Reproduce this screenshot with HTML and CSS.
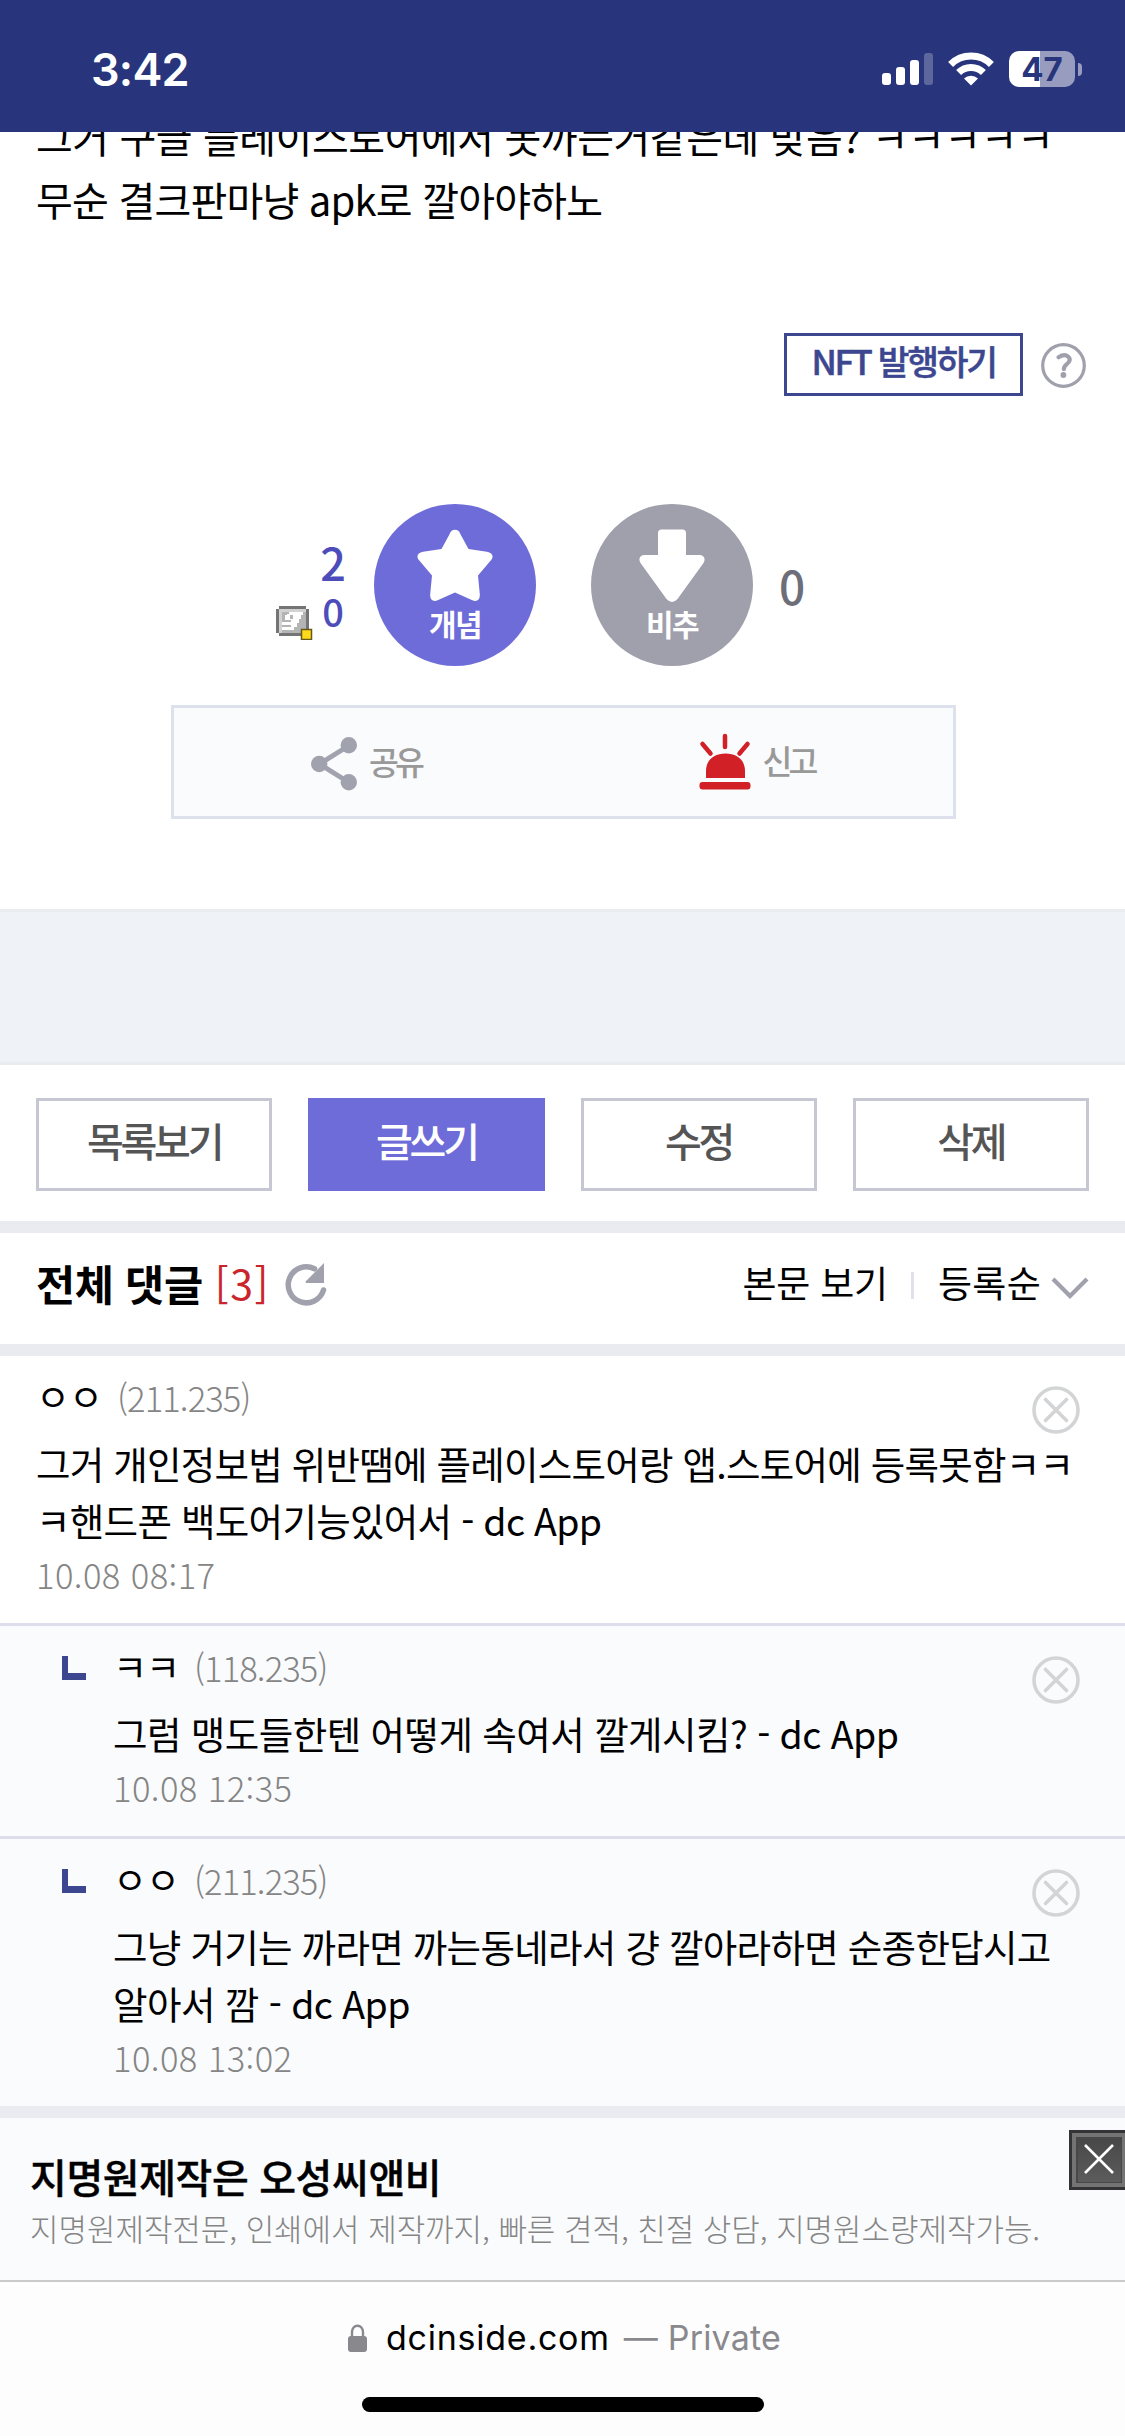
FILE: index.html
```html
<!DOCTYPE html>
<html lang="ko">
<head>
<meta charset="utf-8">
<title>dcinside.com</title>
<link rel="stylesheet" href="styles.css">
</head>
<body>
<svg class="defs" width="0" height="0" aria-hidden="true">
  <symbol id="remove" viewBox="0 0 48 48"><g fill="none" stroke="#d3d4d5" stroke-width="3.6" stroke-linecap="round"><circle cx="24" cy="24" r="22"/><path d="M13.5 13.5l21 21M34.5 13.5l-21 21"/></g></symbol>
  <symbol id="branch" viewBox="0 0 24 24"><path d="M0 0h6v17h18v7H0z" fill="#3c4790"/></symbol>
</svg>
<header class="status">
  <span class="clock">3:42</span>
  <div class="indicators">
    <svg width="51" height="36" viewBox="0 0 51 36" fill="#fff"><rect y="22" width="9" height="12" rx="3"/><rect x="14" y="16" width="9" height="18" rx="3"/><rect x="28" y="9" width="9" height="25" rx="3"/><rect x="42" y="2" width="9" height="32" rx="3" opacity=".25"/></svg>
    <svg class="wifi" width="46" height="36" viewBox="0 0 46 36"><g fill="none" stroke="#fff" stroke-width="7"><path d="M2.6 13.4a29 29 0 0 1 40.8 0"/><path d="M10.6 21.5a17.6 17.6 0 0 1 24.8 0"/></g><path d="M23 34.5l-7-7a10 10 0 0 1 14 0z" fill="#fff"/></svg>
    <div class="battery">47</div><i class="knob"></i>
  </div>
</header>

<main>
<section class="post">
  <div class="post-text">
    <p>그거 구글 플레이스토어에서 못까는거같은데 맞음? ㅋㅋㅋㅋㅋ</p>
    <p class="tight">무순 결크판마냥 apk로 깔아야하노</p>
  </div>
  <div class="nft">
    <button class="nft-button">NFT 발행하기</button>
    <svg width="45" height="45" viewBox="0 0 45 45" fill="none" stroke="#a0a0ac"><circle cx="22.5" cy="22.5" r="20.8" stroke-width="3.2"/><path d="M17.5 14.2q6-3.6 9.6-.6c3 2.6 1.3 5.3-1.2 7.4-2 1.7-3 2.7-3.1 5.2" stroke-width="4.2" stroke-linecap="round"/><circle cx="22.4" cy="32" r="2.9" fill="#a0a0ac" stroke="none"/></svg>
  </div>
  <div class="votes">
    <div class="ups">
      <span class="up">2</span>
      <span class="member">
        <svg width="37" height="34" viewBox="0 0 37 34"><path d="M3 0h27v3h3v21h-3v6H3v-3H0V3h3z" fill="#757575"/><path d="M3 3h27v24H3z" fill="#b4b4b4"/><path d="M3 3h27v3H6v21H3z" fill="#d2d2d2"/><path d="M13 6h14v3h-2v4h-2v4h-2v4h-3v3H6v-3h9v-2H6v-3h9v-2H9v-5h2V8h2zM14 9v4h3V9z" fill="#fff"/><rect x="25.5" y="23.5" width="10" height="10" fill="#ffd91a" stroke="#66571b" stroke-width="1.5"/></svg>
        <span>0</span>
      </span>
    </div>
    <button class="round recommend">
      <svg width="76" height="73" viewBox="0 0 76 73"><path d="M38 .8c3 0 4.6 2 5.6 4.600L51.500 20l18.400 2.700c6 1 7.300 5.300 3.600 9.100L61 46.500l1.800 18.800c.5 6-3.300 8-8 5.700L38 63.400 21.200 71c-4.700 2.300-8.500.3-8-5.700L15 46.500 2.500 31.800c-3.700-3.800-2.400-8.100 3.600-9.100L24.500 20 32.400 5.400C33.400 2.800 35 .8 38 .8z" fill="#fff"/></svg>
      <span>개념</span>
    </button>
    <button class="round oppose">
      <svg width="66" height="73" viewBox="0 0 66 73"><path d="M22.500.500h21q3.500 0 3.500 3.500v22h13c5 0 7 4 4.500 8L38.500 70q-5.500 6-11 0L1.500 34C-1 30 1 26 6 26h13V4q0-3.500 3.500-3.500z" fill="#fff"/></svg>
      <span>비추</span>
    </button>
    <span class="down">0</span>
  </div>
  <div class="share-box">
    <div class="share"><svg width="46" height="54" viewBox="0 0 46 54"><path d="M38 8.5L8.5 27 38 45.5" fill="none" stroke="#a0a2ae" stroke-width="5"/><g fill="#a0a2ae"><circle cx="37.8" cy="8.2" r="8.2"/><circle cx="8.2" cy="27" r="8.2"/><circle cx="37.8" cy="45.2" r="8.2"/></g></svg><span>공유</span></div>
    <div class="report"><svg width="52" height="57" viewBox="0 0 52 57" fill="#d22027"><rect x=".5" y="49" width="51" height="7.5" rx="3"/><path d="M7 45V38C7 27 15 20.5 26.5 20.5S46 27 46 38v7z"/><path d="M26 3v11M3.5 11l8 9.5M48.5 11l-8 9.5" fill="none" stroke="#d22027" stroke-width="4.5" stroke-linecap="round"/></svg><span>신고</span></div>
  </div>
</section>

<div class="banner"></div>

<nav class="actions">
  <button>목록보기</button>
  <button class="write">글쓰기</button>
  <button>수정</button>
  <button>삭제</button>
</nav>

<div class="comments-head">
  <h2>전체 댓글</h2><span class="count">[3]</span>
  <svg class="refresh" width="42" height="43" viewBox="0 0 42 43"><path d="M38.5 27A18 18 0 1 1 29.5 5.8" fill="none" stroke="#a0a1ad" stroke-width="5.5" stroke-linecap="round"/><path d="M39 0v20H21.5q-2-1 0-2.5z" fill="#a0a1ad"/></svg>
  <span class="view">본문 보기</span><i class="divider"></i><span class="sort">등록순</span>
  <svg class="chevron" width="38" height="22" viewBox="0 0 38 22"><path d="M2 2l17 17L36 2" fill="none" stroke="#a0a1ad" stroke-width="4.2"/></svg>
</div>

<section class="comments">
  <article class="comment">
    <div class="content">
      <div class="who"><b>ㅇㅇ</b><span>(211.235)</span><svg class="remove"><use href="#remove"/></svg></div>
      <p class="tight">그거 개인정보법 위반땜에 플레이스토어랑 앱.스토어에 등록못함ㅋㅋ</p>
      <p>ㅋ핸드폰 백도어기능있어서 - dc App</p>
      <time>10.08 08:17</time>
    </div>
  </article>
  <article class="comment reply">
    <svg class="branch"><use href="#branch"/></svg>
    <div class="content">
      <div class="who"><b>ㅋㅋ</b><span>(118.235)</span><svg class="remove"><use href="#remove"/></svg></div>
      <p class="loose">그럼 맹도들한텐 어떻게 속여서 깔게시킴? - dc App</p>
      <time>10.08 12:35</time>
    </div>
  </article>
  <article class="comment reply">
    <svg class="branch"><use href="#branch"/></svg>
    <div class="content">
      <div class="who"><b>ㅇㅇ</b><span>(211.235)</span><svg class="remove"><use href="#remove"/></svg></div>
      <p>그냥 거기는 까라면 까는동네라서 걍 깔아라하면 순종한답시고</p>
      <p class="loose">알아서 깜 - dc App</p>
      <time>10.08 13:02</time>
    </div>
  </article>
</section>

<aside class="ad">
  <h3>지명원제작은 오성씨앤비</h3>
  <p>지명원제작전문, 인쇄에서 제작까지, 빠른 견적, 친절 상담, 지명원소량제작가능.</p>
  <svg class="ad-close" width="56" height="60" viewBox="0 0 56 60"><defs><linearGradient id="g" x2="0" y2="1"><stop stop-color="#484848"/><stop offset="1" stop-color="#5c5c5c"/></linearGradient></defs><path d="M0 0h56v60H0z" fill="#343436"/><path d="M3 3h53v54H3z" fill="#747474"/><path d="M7 7h46v46H7z" fill="#484848"/><path d="M9 9h43v43H9z" fill="url(#g)"/><path d="M16 15l28 28M44 15L16 43" stroke="#fff" stroke-width="2.6"/></svg>
</aside>
</main>

<footer class="browser">
  <div class="url">
    <svg width="19" height="28" viewBox="0 0 19 28"><rect y="12" width="19" height="16" rx="3" fill="#89898d"/><path d="M4 13V8a5.5 6.3 0 0 1 11 0v5" fill="none" stroke="#89898d" stroke-width="2.4"/></svg>
    <span class="host">dcinside.com</span><span class="private">— Private</span>
  </div>
  <i class="home"></i>
</footer>
</body>
</html>
```
FILE: styles.css
```css
* { box-sizing: border-box; margin: 0; padding: 0; }
body {
  width: 1125px; height: 2436px; overflow: hidden;
  background: #fff; color: #000;
  font-family: "Noto Sans CJK KR", sans-serif;
  white-space: nowrap;
}
button { font-family: inherit; border: 0; background: none; }
svg { display: block; flex: none; }
.defs { position: absolute; }

.status {
  height: 132px; background: #28357c; color: #fff;
  display: flex; justify-content: space-between;
  padding: 51px 43px 0 91px;
  font-family: Inter, sans-serif;
}
.clock { font-size: 45px; font-weight: 600; line-height: 37px; letter-spacing: -.8px; }
.indicators { display: flex; height: 36px; }
.wifi { margin: 0 15px; }
.battery {
  width: 66px; height: 36px; border-radius: 10px;
  background: linear-gradient(90deg, #fff 31px, #989dc0 31px);
  color: #28357c; font-size: 33px; font-weight: 700; line-height: 36px; text-align: center;
}
.knob { width: 4px; height: 13px; margin: 12px 0 0 3px; border-radius: 0 4px 4px 0; background: #989dc0; }

.post { height: 777px; overflow: hidden; }
.post-text { margin-top: -27px; padding-left: 36px; font-size: 40px; line-height: 63px; letter-spacing: -.45px; }
.post-text .tight { letter-spacing: -.8px; }
.nft { display: flex; justify-content: flex-end; align-items: center; gap: 18px; margin-top: 102px; padding-right: 39px; }
.nft svg { margin-top: 2px; }
.nft-button {
  width: 239px; height: 63px; border: 3px solid #3c4790; padding-bottom: 9px;
  color: #3c4790; font-size: 34.5px; font-weight: 500; letter-spacing: -2.3px; line-height: 48px;
  -webkit-text-stroke: .5px #3c4790;
}
.votes { display: flex; align-items: center; height: 162px; margin-top: 108px; }
.ups { width: 346px; align-self: flex-start; padding-top: 33px; display: flex; flex-direction: column; align-items: flex-end; color: #4d4cbb; font-weight: 500; }
.up { font-size: 45px; line-height: 50px; }
.member { display: flex; align-items: flex-start; gap: 9px; margin-right: 2px; font-size: 38px; line-height: 48px; }
.member svg { margin-top: 19px; }
.round { width: 162px; height: 162px; border-radius: 50%; display: flex; flex-direction: column; align-items: center; padding-top: 25px; color: #fff; }
.round span { margin-top: 4px; font-size: 30px; font-weight: 700; line-height: 34px; letter-spacing: -1.5px; }
.recommend { margin-left: 28px; background: #6e6cd8; }
.oppose { margin-left: 55px; background: #a0a0ac; }
.down { margin-left: 26px; font-size: 46px; font-weight: 500; line-height: 48px; color: #6c6e7a; }
.share-box {
  width: 785px; height: 114px; margin: 39px 0 0 171px;
  border: 3px solid #dde1ec; background: #fafbfd;
  display: grid; grid-template-columns: 1fr 1fr;
  color: #999; font-size: 32.5px; line-height: 48px; letter-spacing: -4px; font-weight: 500;
}
.share, .report { display: flex; align-items: flex-start; }
.share { padding-left: 137px; gap: 12px; padding-top: 29px; }
.report { padding-left: 135px; gap: 12px; padding-top: 25px; }
.report span { margin-top: 3px; }

.banner { height: 156px; background: #eff3f7; border: solid #ebecf0; border-width: 3px 0; }

.actions { display: grid; grid-template-columns: repeat(4, 1fr); gap: 36px; height: 156px; padding: 33px 36px 30px; }
.actions button { border: 3px solid #c7c7d3; padding-bottom: 9px; color: #555; font-size: 40px; font-weight: 500; letter-spacing: -3.2px; line-height: 60px; }
.actions .write { background: #6e6cd8; border-color: #6e6cd8; color: #fff; }

.comments-head { display: flex; align-items: center; height: 135px; border: solid #eaebf0; border-width: 12px 0; padding: 0 36px 13px; font-size: 37px; }
.comments-head h2 { font-size: 42.6px; font-weight: 700; letter-spacing: -.4px; }
.count { margin-left: 12px; font-size: 41px; letter-spacing: 1.6px; color: #c9252b; }
.refresh { margin: 5px auto 0 15px; }
.view { letter-spacing: -.2px; }
.sort { letter-spacing: .3px; }
.divider { width: 3px; height: 27px; margin: 6px 24px 0 23px; background: #dfe1ec; }
.chevron { margin: 11px 0 0 10px; }

.comment { display: flex; padding: 12px 45px 23px 36px; }
.reply { border-top: 3px solid #dcdfeb; background: #fafbfd; padding-left: 62px; }
.branch { width: 24px; height: 24px; margin: 18px 27px 0 0; }
.content { flex: 1; min-width: 0; }
.who { display: flex; align-items: baseline; height: 57px; margin-bottom: 9px; line-height: 57px; }
.who b { font-size: 37px; font-weight: 400; letter-spacing: -1px; }
.who span { margin-left: 15px; font-size: 34.6px; font-weight: 300; letter-spacing: -.9px; color: #858585; }
.remove { width: 48px; height: 48px; align-self: flex-start; margin: 18px 0 0 auto; }
.content p { font-size: 37.5px; line-height: 57px; letter-spacing: -.7px; }
.content .tight { letter-spacing: -.75px; }
.content .loose { letter-spacing: -.55px; }
.content time { display: block; font-size: 34.6px; font-weight: 300; line-height: 52px; letter-spacing: .4px; color: #858585; }

.ad { position: relative; height: 174px; border-top: 12px solid #eaebf0; background: #fafbfd; padding: 33px 0 0 30px; }
.ad h3 { font-size: 40px; line-height: 50px; font-weight: 500; letter-spacing: -.4px; -webkit-text-stroke: .4px #000; }
.ad p { margin-top: 5px; font-size: 31px; line-height: 44px; letter-spacing: -.05px; font-weight: 300; color: #858585; }
.ad-close { position: absolute; right: 0; top: 12px; }

.browser { height: 156px; border-top: 2px solid #cacacc; background: #fdfdfe; font-family: Inter, sans-serif; }
.url { display: flex; align-items: center; height: 40px; margin: 36px 0 0 348px; font-size: 34px; line-height: 40px; }
.host { margin-left: 19px; letter-spacing: .75px; }
.private { margin-left: 14px; letter-spacing: .2px; color: #89898d; }
.home { display: block; width: 402px; height: 15px; margin: 39px 0 0 362px; border-radius: 8px; background: #000; }
```
